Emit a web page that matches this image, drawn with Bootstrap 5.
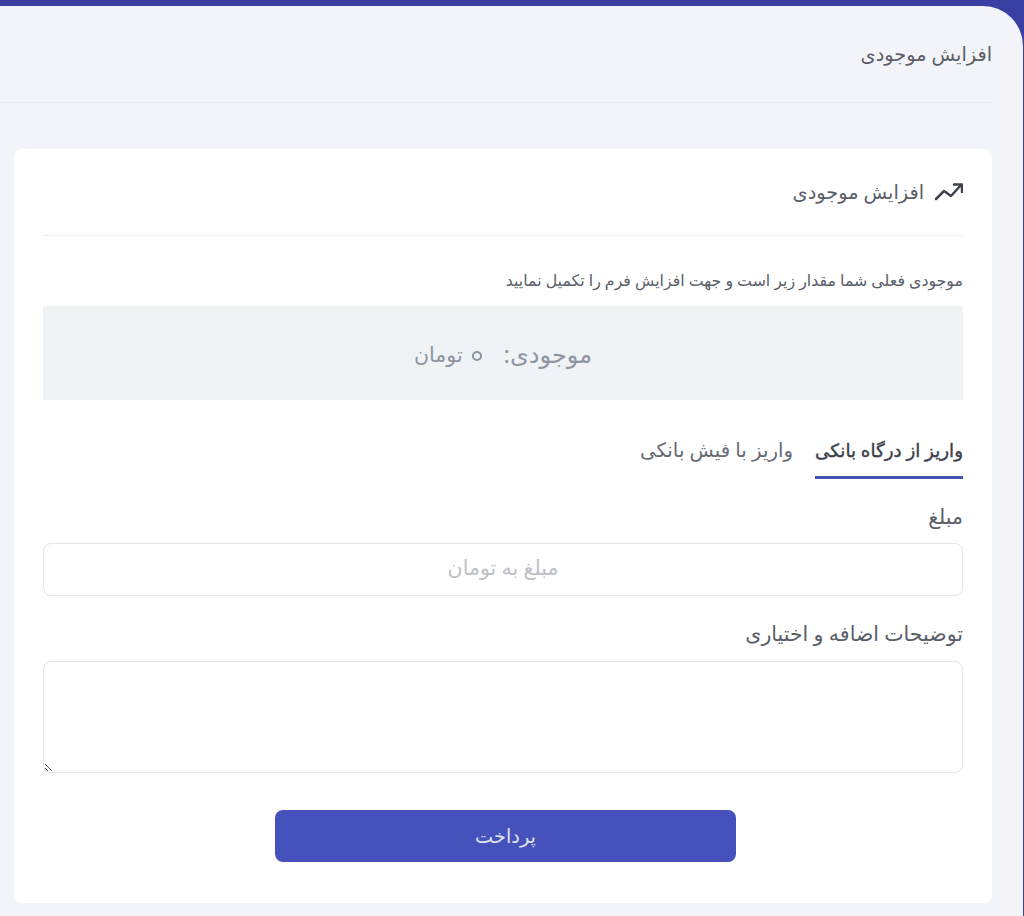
<!DOCTYPE html>
<html lang="fa" dir="rtl">
<head>
<meta charset="utf-8">
<title>افزایش موجودی</title>
<link href="https://cdn.jsdelivr.net/npm/bootstrap@5.3.0/dist/css/bootstrap.min.css" rel="stylesheet">
<style>
html,body{height:916px;overflow:hidden}
body{background:#3a3fa4;padding-top:6px;font-family:"Noto Sans","DejaVu Sans",sans-serif;color:#454a54}
.shell{background:#f3f4f9;height:910px;margin-left:0;margin-right:1px;border-top-right-radius:40px;padding:0 31px 0 32px}
.page-head{height:97px;border-bottom:1px solid #e6e8ee;display:flex;align-items:center;font-size:19.3px;color:#5a5e68;padding-top:1px;margin-left:-32px}
.box{background:#fff;border-radius:8px;margin:46px 0 0 -18px;padding:0 29px 40px 29px;height:754px}
.box-head{height:87px;border-bottom:1px solid #eceef1;display:flex;align-items:center;gap:9px;font-size:19.3px;color:#5a5e68}
.hint{font-size:15.8px;margin:32px 0 14px;line-height:24px;color:#5a5e68}
.balance{background:#eff3f5;height:94px;padding-top:2px;color:#8f94a1;font-size:20.5px;display:flex;justify-content:center;align-items:center;gap:22px}
.balance b{font-weight:400;font-size:24px}
.zero-digit{display:inline-flex;align-items:center;justify-content:center;width:10px;height:10px;border:2px solid #8f94a1;border-radius:50%;font-size:8px;line-height:1;overflow:hidden;color:transparent;margin-left:9px;vertical-align:middle}
.tabs-row{display:flex;gap:22px;margin-top:27px;height:52px;font-size:19.8px;color:#666a74}
.tab-on{font-size:18.3px;-webkit-text-stroke:.4px #3c404a;color:#3c404a;border-bottom:3px solid #4552b5;padding-top:9px}
.tab-off{padding-top:8px}
.fld-label{font-size:20.5px;color:#5a5e68;line-height:27px;margin-bottom:13px}
.fld-label-tall{margin-bottom:14px}
.fld{border:1px solid #e3e5ea;border-radius:8px;box-shadow:none;font-size:20.5px}
.fld::placeholder{color:#bdc0c7}
.amount{height:53px;text-align:center;padding-top:0;padding-bottom:5px}
.notes{height:112px;resize:vertical}
.pay{display:block;width:461px;height:52px;margin:37px 227px 0 auto;background:#4652bb;border:0;border-radius:8px;font-size:19.3px;color:#dfe1f3}
</style>
</head>
<body>
<main class="shell">
  <div class="page-head">افزایش موجودی</div>
  <section class="box">
    <div class="box-head">
      <svg width="30" height="20" viewBox="0 0 30 20" fill="none" stroke="#3f434d" stroke-width="2.5" stroke-linecap="round" stroke-linejoin="round"><path d="M3 17 11 9l7 5L28 3"/><path d="M21 2.500h8v7.500"/></svg>
      <span>افزایش موجودی</span>
    </div>
    <p class="hint">موجودی فعلی شما مقدار زیر است و جهت افزایش فرم را تکمیل نمایید</p>
    <div class="balance"><b>موجودی:</b><span><span class="zero-digit">۰</span>تومان</span></div>
    <div class="tabs-row">
      <div class="tab-on">واریز از درگاه بانکی</div>
      <div class="tab-off">واریز با فیش بانکی</div>
    </div>
    <form>
      <div class="mt-4 mb-4">
        <label class="fld-label d-block" for="amt">مبلغ</label>
        <input id="amt" class="form-control fld amount" placeholder="مبلغ به تومان">
      </div>
      <div>
        <label class="fld-label fld-label-tall d-block" for="nt">توضیحات اضافه و اختیاری</label>
        <textarea id="nt" class="form-control fld notes"></textarea>
      </div>
      <button type="button" class="btn pay">پرداخت</button>
    </form>
  </section>
</main>
<script src="https://cdn.jsdelivr.net/npm/bootstrap@5.3.0/dist/js/bootstrap.bundle.min.js"></script>
</body>
</html>
